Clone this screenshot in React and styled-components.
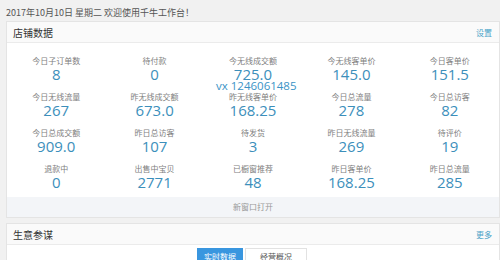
import React from "react";
import styled, { createGlobalStyle } from "styled-components";

const GlobalStyle = createGlobalStyle`
  html, body {
    margin: 0;
    padding: 0;
    background: #f1f1f1;
    font-family: "Noto Sans CJK SC", "Liberation Sans", sans-serif;
  }
`;

const Page = styled.div`
  width: 500px;
  height: 260px;
  overflow: hidden;
  position: relative;
`;

const TopBar = styled.div`
  height: 21px;
  line-height: 20px;
  padding: 3px 0 0 6px;
  box-sizing: border-box;
  font-size: 9px;
  color: #555;
`;

const Panel = styled.div`
  margin: 0 0 5px 6px;
  width: 494px;
  background: #fff;
  border: 1px solid #e4e4e4;
  box-sizing: border-box;
  position: relative;
`;

const PanelHeader = styled.div`
  height: 20px;
  display: flex;
  align-items: center;
  justify-content: space-between;
  padding: 0 7px 0 6px;
  background: #fafafa;
  border-bottom: 1px solid #ebebeb;
  font-size: 10px;
  color: #333;
`;

const HeaderLink = styled.span`
  font-size: 8px;
  color: #4aa3c8;
`;

const StatGrid = styled.div`
  display: grid;
  grid-template-columns: repeat(5, 1fr);
  row-gap: 9px;
  padding: 12px 0 7px;
`;

const Stat = styled.div`
  display: flex;
  flex-direction: column;
  align-items: center;
`;

const Label = styled.div`
  font-size: 8px;
  line-height: 11px;
  color: #808080;
`;

const Value = styled.div`
  font-family: "Open Sans", "Liberation Sans", sans-serif;
  font-size: 15px;
  line-height: 16px;
  color: #3c8fbb;
`;

const Watermark = styled.div`
  position: absolute;
  left: 209px;
  top: 56px;
  font-family: "Open Sans", "Liberation Sans", sans-serif;
  font-size: 11.5px;
  line-height: 16px;
  color: #3a93c6;
  white-space: nowrap;
`;

const FooterBar = styled.div`
  height: 20px;
  line-height: 20px;
  text-align: center;
  font-size: 8px;
  color: #999;
  background: #f3f5f8;
`;

const Tabs = styled.div`
  display: flex;
  justify-content: center;
  padding: 3px 0 2px;
`;

const Tab = styled.div`
  width: ${(p) => (p.active ? "44px" : "60px")};
  height: 15px;
  line-height: 15px;
  text-align: center;
  font-size: 8px;
  margin-right: 2px;
  color: ${(p) => (p.active ? "#fff" : "#555")};
  background: ${(p) => (p.active ? "#3996df" : "#fff")};
  border: 1px solid ${(p) => (p.active ? "#3996df" : "#e2e2e2")};
`;

const stats = [
  ["今日子订单数", "8"],
  ["待付款", "0"],
  ["今无线成交额", "725.0"],
  ["今无线客单价", "145.0"],
  ["今日客单价", "151.5"],
  ["今日无线流量", "267"],
  ["昨无线成交额", "673.0"],
  ["昨无线客单价", "168.25"],
  ["今日总流量", "278"],
  ["今日总访客", "82"],
  ["今日总成交额", "909.0"],
  ["昨日总访客", "107"],
  ["待发货", "3"],
  ["昨日无线流量", "269"],
  ["待评价", "19"],
  ["退款中", "0"],
  ["出售中宝贝", "2771"],
  ["已橱窗推荐", "48"],
  ["昨日客单价", "168.25"],
  ["昨日总流量", "285"],
];

export default function App() {
  return (
    <Page>
      <GlobalStyle />
      <TopBar>2017年10月10日 星期二 欢迎使用千牛工作台！</TopBar>
      <Panel>
        <PanelHeader>
          <span>店铺数据</span>
          <HeaderLink>设置</HeaderLink>
        </PanelHeader>
        <StatGrid>
          {stats.map(([label, value]) => (
            <Stat key={label}>
              <Label>{label}</Label>
              <Value>{value}</Value>
            </Stat>
          ))}
        </StatGrid>
        <FooterBar>新窗口打开</FooterBar>
        <Watermark>vx 1246061485</Watermark>
      </Panel>
      <Panel>
        <PanelHeader>
          <span>生意参谋</span>
          <HeaderLink>更多</HeaderLink>
        </PanelHeader>
        <Tabs>
          <Tab active>实时数据</Tab>
          <Tab>经营概况</Tab>
        </Tabs>
      </Panel>
    </Page>
  );
}
